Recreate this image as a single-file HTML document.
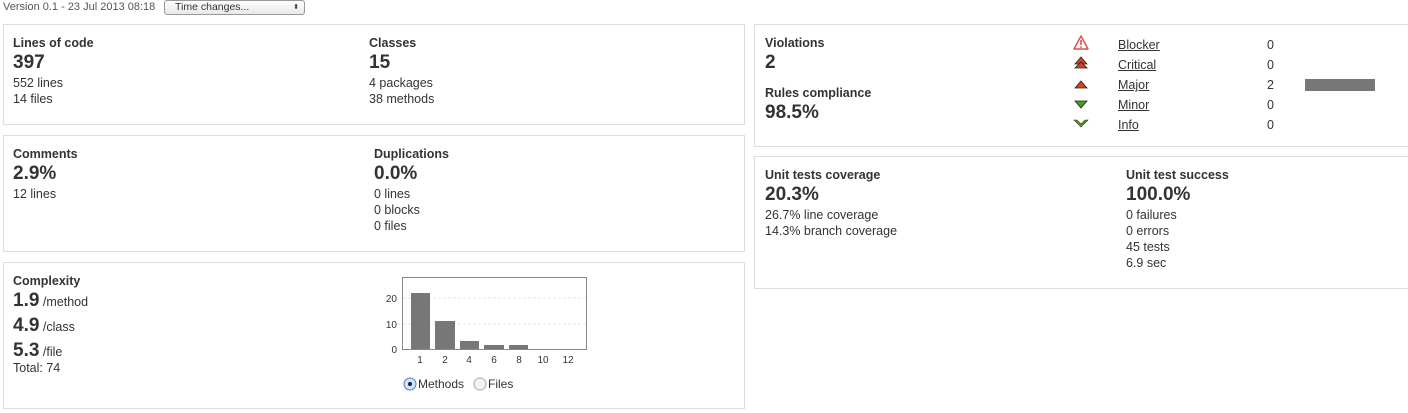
<!DOCTYPE html><html><head><style>
body{margin:0;width:1408px;height:413px;background:#fff;font-family:"Liberation Sans",sans-serif;color:#333;font-size:12.5px;position:relative;overflow:hidden}
.a{position:absolute}
.box{position:absolute;border:1px solid #ddd;box-sizing:border-box}
.t{font-weight:bold;font-size:12.5px}
.b{font-weight:bold;font-size:19px;line-height:24px;margin-top:1px}
.l{line-height:16px}
.c div{line-height:24px}
.c .b{margin:0}
a{color:#333;text-decoration:underline}
</style></head><body>
<div class="a" style="left:3px;top:1px;font-size:11px;color:#555">Version 0.1 - 23 Jul 2013 08:18</div>
<div class="a" style="left:164px;top:0;width:139px;height:13px;border:1px solid #999;border-radius:3px;font-size:10.5px;line-height:13px;background:linear-gradient(#fff,#e8e8e8)"><span style="margin-left:10px">Time changes...</span><span style="position:absolute;right:5px;font-size:7px;top:0">⬍</span></div>

<div class="box" style="left:3px;top:24px;width:742px;height:101px"></div>
<div class="a" style="left:13px;top:36px"><div class="t">Lines of code</div><div class="b">397</div><div class="l">552 lines<br>14 files</div></div>
<div class="a" style="left:369px;top:36px"><div class="t">Classes</div><div class="b">15</div><div class="l">4 packages<br>38 methods</div></div>

<div class="box" style="left:3px;top:135px;width:742px;height:117px"></div>
<div class="a" style="left:13px;top:147px"><div class="t">Comments</div><div class="b">2.9%</div><div class="l">12 lines</div></div>
<div class="a" style="left:374px;top:147px"><div class="t">Duplications</div><div class="b">0.0%</div><div class="l">0 lines<br>0 blocks<br>0 files</div></div>

<div class="box" style="left:3px;top:262px;width:742px;height:147px"></div>
<div class="a c" style="left:13px;top:274px"><div class="t" style="line-height:15px">Complexity</div>
<div><span class="b">1.9</span> /method</div>
<div><span class="b">4.9</span> /class</div>
<div><span class="b">5.3</span> /file</div>
<div style="line-height:14px;margin-top:-3px">Total: 74</div></div>
<svg class="a" style="left:360px;top:265px" width="240" height="140" font-family="Liberation Sans" font-size="10" fill="#333">
<rect x="42.5" y="12.5" width="184" height="72" fill="none" stroke="#888"/>
<line x1="43" y1="33" x2="226" y2="33" stroke="#e4e4e4" stroke-dasharray="3,2"/>
<line x1="43" y1="59" x2="226" y2="59" stroke="#e4e4e4" stroke-dasharray="3,2"/>
<g fill="#777"><rect x="51" y="28" width="19" height="56"/><rect x="75" y="56" width="20" height="28"/><rect x="100" y="76" width="19" height="8"/><rect x="124" y="80" width="20" height="4"/><rect x="149" y="80" width="19" height="4"/></g>
<g text-anchor="end"><text x="37" y="37">20</text><text x="37" y="63">10</text><text x="37" y="88">0</text></g>
<g text-anchor="middle"><text x="60" y="98">1</text><text x="85" y="98">2</text><text x="109" y="98">4</text><text x="134" y="98">6</text><text x="159" y="98">8</text><text x="183" y="98">10</text><text x="208" y="98">12</text></g>
<circle cx="50" cy="119" r="6" fill="#cfe3fb" stroke="#4a80c8"/><circle cx="50" cy="119" r="2" fill="#222"/>
<text x="58" y="123" font-size="12">Methods</text>
<circle cx="120" cy="119" r="6" fill="#f2f2f2" stroke="#aaa"/>
<text x="128" y="123" font-size="12">Files</text>
</svg>

<div class="box" style="left:754px;top:24px;width:660px;height:123px"></div>
<div class="a" style="left:765px;top:36px"><div class="t">Violations</div><div class="b">2</div><div class="t" style="margin-top:11px">Rules compliance</div><div class="b">98.5%</div></div>
<svg class="a" style="left:1072px;top:34px" width="20" height="100">
<path d="M9 2 L16 15 H2 Z" fill="none" stroke="#d9534f" stroke-width="1.5" stroke-linejoin="round"/><line x1="9" y1="6" x2="9" y2="11" stroke="#d9534f" stroke-width="1.6"/><circle cx="9" cy="13" r=".9" fill="#d9534f"/>
<path d="M3 30 L9 23 L15 30 Z" fill="#d2461b" stroke="#222" stroke-width=".8"/><path d="M3 34 L9 28 L15 34 Z" fill="#d2461b" stroke="#222" stroke-width=".8"/>
<path d="M3 54 L9 47 L15 54 Z" fill="#d2461b" stroke="#222" stroke-width=".8"/>
<path d="M3 67 L15 67 L9 74 Z" fill="#4c9e1a" stroke="#222" stroke-width=".8"/>
<path d="M2 86 L9 93 L16 86 L13 86 L9 90 L5 86 Z" fill="#4c9e1a" stroke="#333" stroke-width=".6"/>
</svg>
<div class="a" style="left:1118px;top:35px;line-height:20px"><a>Blocker</a><br><a>Critical</a><br><a>Major</a><br><a>Minor</a><br><a>Info</a></div>
<div class="a" style="left:1267px;top:35px;line-height:20px">0<br>0<br>2<br>0<br>0</div>
<div class="a" style="left:1305px;top:79px;width:70px;height:12px;background:#777"></div>

<div class="box" style="left:754px;top:156px;width:660px;height:133px"></div>
<div class="a" style="left:765px;top:168px"><div class="t">Unit tests coverage</div><div class="b">20.3%</div><div class="l">26.7% line coverage<br>14.3% branch coverage</div></div>
<div class="a" style="left:1126px;top:168px"><div class="t">Unit test success</div><div class="b">100.0%</div><div class="l">0 failures<br>0 errors<br>45 tests<br>6.9 sec</div></div>
</body></html>
